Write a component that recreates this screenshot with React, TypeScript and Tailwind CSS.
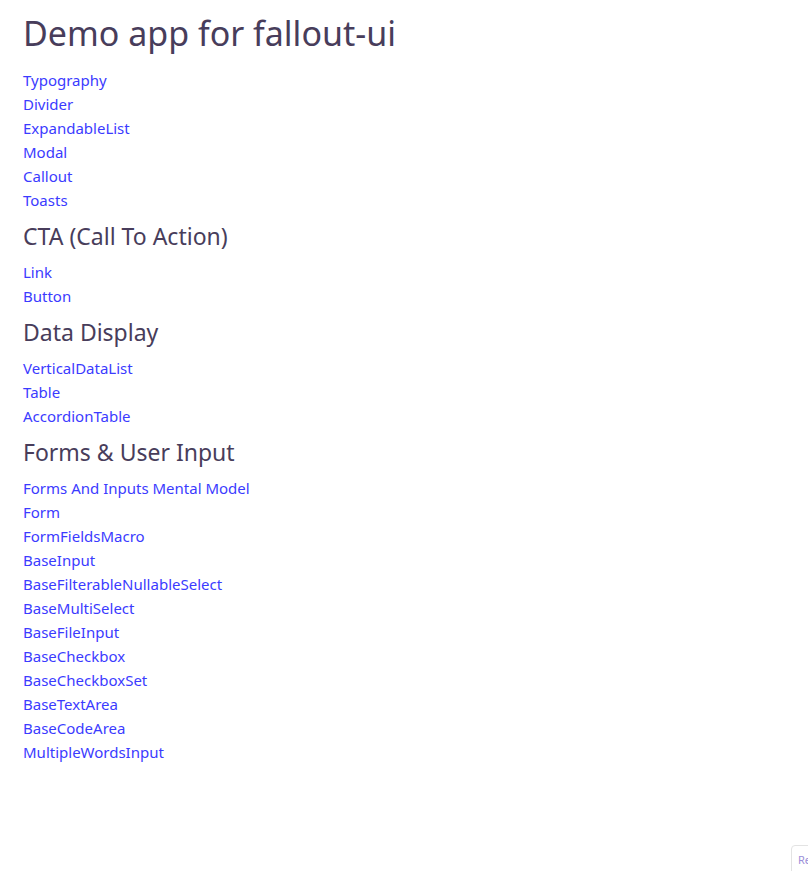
const groups: { title?: string; links: string[] }[] = [
  {
    links: ['Typography', 'Divider', 'ExpandableList', 'Modal', 'Callout', 'Toasts'],
  },
  {
    title: 'CTA (Call To Action)',
    links: ['Link', 'Button'],
  },
  {
    title: 'Data Display',
    links: ['VerticalDataList', 'Table', 'AccordionTable'],
  },
  {
    title: 'Forms & User Input',
    links: [
      'Forms And Inputs Mental Model',
      'Form',
      'FormFieldsMacro',
      'BaseInput',
      'BaseFilterableNullableSelect',
      'BaseMultiSelect',
      'BaseFileInput',
      'BaseCheckbox',
      'BaseCheckboxSet',
      'BaseTextArea',
      'BaseCodeArea',
      'MultipleWordsInput',
    ],
  },
];

export default function App() {
  return (
    <div className="relative min-h-[871px] w-[808px] overflow-hidden bg-white font-['Noto_Sans',sans-serif]">
      <main className="px-[23px] pt-[10px]">
        <h1 className="mb-3 text-[34px] leading-[46px] text-[#483d5b]">Demo app for fallout-ui</h1>

        {groups.map((g, i) => (
          <section key={i}>
            {g.title && (
              <h2 className="my-2 text-[23px] leading-8 text-[#483d5b]">{g.title}</h2>
            )}
            <ul>
              {g.links.map((l) => (
                <li key={l}>
                  <a href="#" className="text-[15px] leading-6 text-[#3b3bff]">
                    {l}
                  </a>
                </li>
              ))}
            </ul>
          </section>
        ))}
      </main>

      {/* fixed corner widget, mostly off screen */}
      <div className="absolute left-[791px] top-[845px] h-10 w-20 rounded-tl border border-[#e3e3e3] bg-white px-1.5 pt-1.5 text-[11px] text-[#9c8fd9]">
        Re
      </div>
    </div>
  );
}
